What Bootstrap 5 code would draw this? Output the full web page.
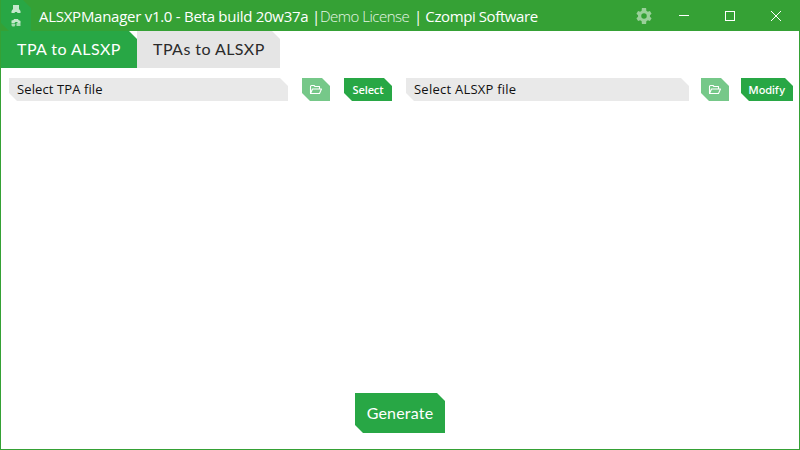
<!DOCTYPE html>
<html lang="en">
<head>
<meta charset="utf-8">
<meta name="viewport" content="width=device-width, initial-scale=1">
<title>ALSXPManager</title>
<link href="https://cdn.jsdelivr.net/npm/bootstrap@5.3.0/dist/css/bootstrap.min.css" rel="stylesheet">
<style>
body{font-family:Lato,"Open Sans",sans-serif;height:450px;overflow:hidden;color:#111}
.window{height:450px;border:1px solid #35a135;border-top:0}
.titlebar{height:31px;background:#35a135;margin:0 -1px;padding-right:1px;color:#fff;font:400 15px/31px "Open Sans","Noto Sans",sans-serif;white-space:nowrap}
.logo{width:31px;height:31px}
.caption{margin-left:8px;width:281px;padding-top:1px;letter-spacing:-.27px}
.license{width:94px;padding-top:1px;color:#e6f6e6;font-weight:300;letter-spacing:-.5px}
.company{padding-top:1px;letter-spacing:-.4px}
.win-btn{width:46px;height:31px;padding:0;border:0;background:none}
.settings{width:34px}
.tab{height:37px;border:0;padding:0 0 1px 16px;font-size:16px;letter-spacing:.43px;text-align:left;white-space:nowrap;background:#e5e5e5;color:#2b2b2b;clip-path:polygon(0 0,calc(100% - 8px) 0,100% 8px,100% 100%,0 100%)}
.tab-one{width:136px}
.tab-two{width:143px}
.tab.current{background:#28a745;color:#fff}
.cut{height:23px;clip-path:polygon(0 0,calc(100% - 8px) 0,100% 8px,100% 100%,8px 100%,0 calc(100% - 8px))}
.file-row{margin-top:10px;padding-left:8px}
.group-tpa{gap:14px;width:397px}
.group-alsxp{gap:12px}
.field{background:#e9e9e9;padding-left:8px;font:13px/23px "Open Sans",sans-serif;white-space:nowrap}
.field-tpa{width:279px;letter-spacing:.1px}
.field-alsxp{width:283px;letter-spacing:.24px}
.btn-cut,.btn-cut:hover{border:0;border-radius:0;padding:0;background:#28a745;color:#fff;font-size:11px;line-height:22px}
.browse,.browse:hover{width:28px;background:#76c889}
.select{width:48px;font-family:"Open Sans",sans-serif;font-weight:600;letter-spacing:-.1px}
.modify{width:52px;font-family:Inter,sans-serif;font-weight:500;letter-spacing:0}
.generate,.generate:hover{width:90px;height:40px;font-size:16px;letter-spacing:.2px;line-height:38px;margin-bottom:16px}
</style>
</head>
<body>
<svg class="d-none"><symbol id="folder" viewBox="0 0 14 12"><path d="M1.500 9.500V2.500q0-1 1-1H5l1 1h4.500v2M1.500 9.500l2-4.500h9l-2 4.500z" fill="none" stroke="#fff" stroke-width="1.100" stroke-linejoin="round"/></symbol></svg>
<div class="window d-flex flex-column bg-white">
  <header class="titlebar d-flex flex-shrink-0">
    <svg class="logo flex-shrink-0" viewBox="0 0 31 31"><path d="M1 0h22l8 8v23H9L1 23z" fill="#28a745"/><g fill="#c4e8cc"><path d="M13 5h6v4l1.500 2v2h-3l-.5-1h-2l-.5 1h-3v-2l1.500-2z"/><path d="M11.500 20.500l2-.500.500-1h4l.5 1 2 1v2h-3v-1h-2l-1 1h-3z"/><path d="M11.500 23.500h3l1 1-1 2h-2l-1-1zM16.500 23h4v3h-4z" opacity=".8"/></g></svg>
    <div class="caption">ALSXPManager v1.0 - Beta build 20w37a |</div>
    <div class="license">Demo License</div>
    <div class="company">| Czompi Software</div>
    <div class="d-flex ms-auto">
      <button class="win-btn settings d-flex align-items-center justify-content-center" aria-label="Settings"><svg width="20" height="20" viewBox="0 0 24 24" fill="#9ad09a"><path d="M20.100 13c.1-.6.1-1.400 0-2l2-1.600-2-3.500-2.500 1a7 7 0 0 0-1.700-1L15.500 2.500h-5l-.4 3.400c-.6.2-1.200.6-1.700 1l-2.500-1-2 3.500L5.900 11a8 8 0 0 0 0 2l-2 1.600 2 3.500 2.500-1c.5.400 1.100.700 1.700 1l.4 3.400h5l.4-3.400c.6-.3 1.200-.6 1.700-1l2.500 1 2-3.500zM13 15.300a3.300 3.300 0 1 1 0-6.600 3.300 3.300 0 0 1 0 6.600z" transform="translate(-1)"/></svg></button>
      <button class="win-btn d-flex align-items-center justify-content-center" aria-label="Minimize"><svg width="10" height="11" shape-rendering="crispEdges"><path d="M0 5.500h10" stroke="#fff"/></svg></button>
      <button class="win-btn d-flex align-items-center justify-content-center" aria-label="Maximize"><svg width="10" height="11" shape-rendering="crispEdges"><path d="M.5 1.500h9v9h-9z" fill="none" stroke="#fff"/></svg></button>
      <button class="win-btn d-flex align-items-center justify-content-center" aria-label="Close"><svg width="10" height="11"><path d="M0 1l10 10M10 1L0 11" stroke="#fff"/></svg></button>
    </div>
  </header>
  <nav class="d-flex flex-shrink-0">
    <button class="tab tab-one current">TPA to ALSXP</button>
    <button class="tab tab-two">TPAs to ALSXP</button>
  </nav>
  <main class="flex-grow-1">
    <div class="file-row d-flex">
      <div class="group-tpa d-flex flex-shrink-0">
        <div class="field field-tpa cut">Select TPA file</div>
        <button class="btn btn-cut cut browse d-flex align-items-center justify-content-center" aria-label="Browse TPA"><svg width="14" height="12"><use href="#folder"/></svg></button>
        <button class="btn btn-cut cut select">Select</button>
      </div>
      <div class="group-alsxp d-flex flex-shrink-0">
        <div class="field field-alsxp cut">Select ALSXP file</div>
        <button class="btn btn-cut cut browse d-flex align-items-center justify-content-center" aria-label="Browse ALSXP"><svg width="14" height="12"><use href="#folder"/></svg></button>
        <button class="btn btn-cut cut modify">Modify</button>
      </div>
    </div>
  </main>
  <button class="btn btn-cut cut generate align-self-center">Generate</button>
</div>
<script src="https://cdn.jsdelivr.net/npm/bootstrap@5.3.0/dist/js/bootstrap.bundle.min.js"></script>
</body>
</html>
